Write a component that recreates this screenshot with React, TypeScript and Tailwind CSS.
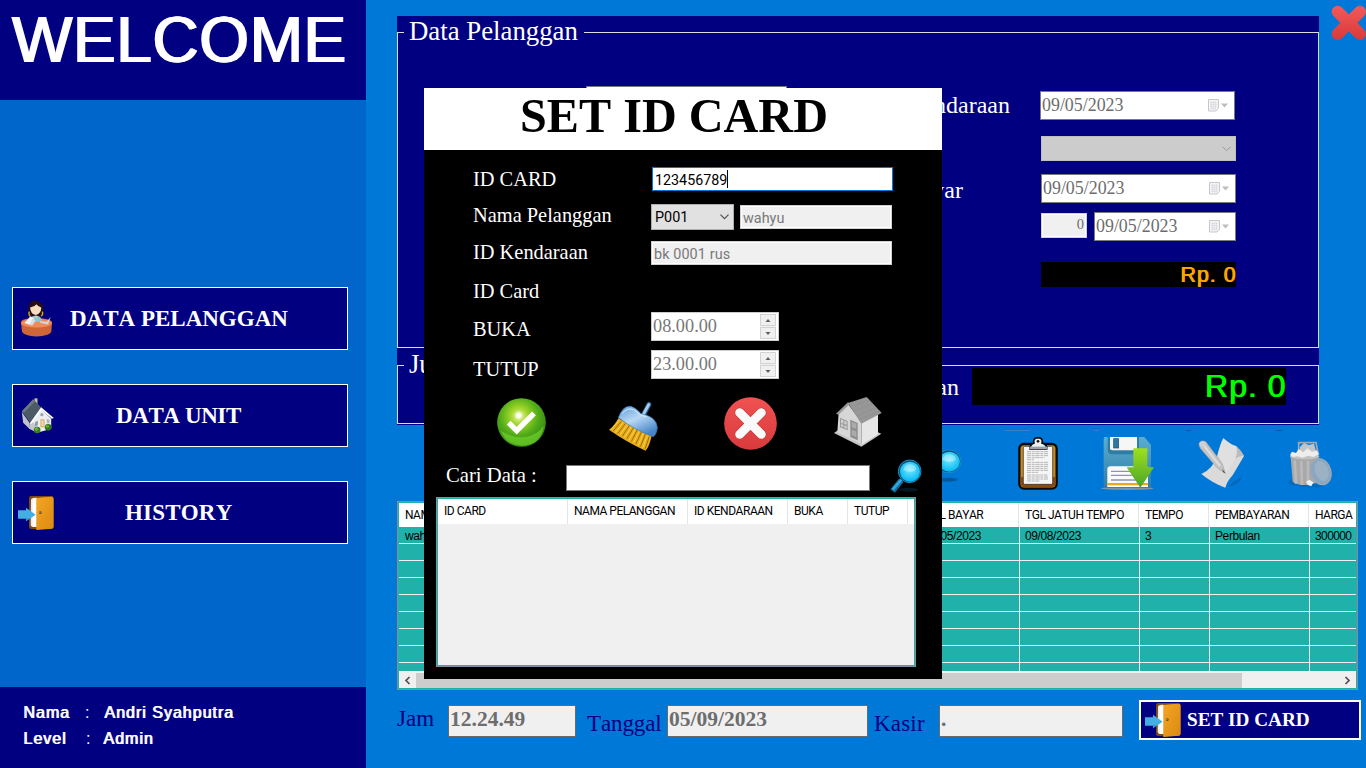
import React from "react";

const SERIF = "font-['Liberation_Serif',serif]";
const SANS = "font-['Liberation_Sans',sans-serif]";
const ROBOTO = "font-['Roboto',sans-serif]";

function DoorIcon() {
  return (
    <svg width="36" height="34" viewBox="0 0 108 102">
      <defs>
        <linearGradient id="door" x1="0" y1="0" x2="1" y2="1">
          <stop offset="0" stopColor="#f5a623" />
          <stop offset="1" stopColor="#d98a12" />
        </linearGradient>
      </defs>
      <rect x="33" y="0" width="73" height="99" rx="6" fill="#7a4a10" />
      <path d="M39 10Q42 5 48 5H56V93H44Q38 92 38 86Z" fill="#ececec" />
      <path d="M44 92V14L56 5V93Z" fill="#fff" />
      <path d="M55 6Q75 3 102 2Q107 3 107 8V92Q107 97 102 98L55 102Z" fill="url(#door)" />
      <circle cx="67" cy="50" r="4" fill="#6b4208" />
      <circle cx="66" cy="49" r="1.5" fill="#ddd" />
      <path d="M0 43H24V35L53 56L24 76V68H0Z" fill="#42aee2" />
      <path d="M0 66H24V74L34 69V66Z" fill="#2583c4" opacity=".5" />
    </svg>
  );
}

function WomanIcon() {
  return (
    <svg width="31" height="37" viewBox="0 0 92 109">
      <path d="M22 44Q18 8 36 2Q40 -2 46 3Q66 5 66 25Q68 42 60 48L26 48Z" fill="#2a0f12" />
      <path d="M25 34Q21 40 27 48M63 34Q67 42 60 48" stroke="#c8a81e" strokeWidth="4" fill="none" />
      <path d="M27 22Q40 20 46 12Q52 20 60 22Q61 40 44 44Q28 42 27 22Z" fill="#f8dcc0" />
      <path d="M0 66Q0 54 45 54Q92 54 92 68L90 94Q84 107 46 108Q10 107 3 94Z" fill="#cf6638" />
      <ellipse cx="46" cy="68" rx="46" ry="13" fill="#f08a58" />
      <path d="M22 58Q30 46 44 46Q58 46 62 58L56 64H30Z" fill="#8fc8cc" />
      <path d="M10 68L28 48L40 54L28 74Z" fill="#f4f4f4" />
      <path d="M24 74L36 52L43 62L34 75Z" fill="#d8dce0" />
      <path d="M56 62L76 64L88 50L80 72L58 68Z" fill="#cdd8dd" />
      <path d="M40 46H49L45 54Z" fill="#f3cfae" />
    </svg>
  );
}

function HouseColorIcon() {
  return (
    <svg width="33" height="36" viewBox="0 0 98 108">
      <rect x="40" y="1" width="9" height="22" fill="#c9b8ac" />
      <path d="M2 42L26 76V94L6 74Z" fill="#bfc4c8" />
      <path d="M28 70L60 34L90 62V92L48 104L26 90Z" fill="#eceef0" />
      <path d="M28 70L48 82V104L24 92Z" fill="#c4c8cc" />
      <path d="M2 40L36 4L62 30L28 76Z" fill="#4c5a66" />
      <path d="M2 40L36 4L42 10L7 46Z" fill="#6a7884" />
      <path d="M60 28L98 60L92 62L61 36L30 78L26 76Z" fill="#fff" />
      <circle cx="62" cy="50" r="5" fill="#9aa6b4" />
      <rect x="58" y="64" width="12" height="24" fill="#d8a860" />
      <path d="M61 67H67V85H61Z" fill="#f6dca0" />
      <path d="M42 72L50 68V82L42 85Z" fill="#8a98a6" />
      <path d="M77 62L85 65V76L77 76Z" fill="#aab4be" />
      <circle cx="48" cy="96" r="10" fill="#3c7d24" />
      <circle cx="46" cy="93" r="5" fill="#6fae3a" />
      <circle cx="81" cy="88" r="10" fill="#2f741c" />
      <circle cx="79" cy="85" r="5" fill="#66a832" />
    </svg>
  );
}

function CheckIcon() {
  return (
    <svg width="49" height="49" viewBox="0 0 147 147">
      <defs>
        <radialGradient id="chk" cx=".45" cy=".37" r=".6">
          <stop offset="0" stopColor="#f0f8a0" />
          <stop offset=".3" stopColor="#9cd52a" />
          <stop offset=".65" stopColor="#52ac18" />
          <stop offset="1" stopColor="#378a10" />
        </radialGradient>
        <radialGradient id="chkGlow">
          <stop offset=".3" stopColor="#fff" />
          <stop offset="1" stopColor="#fff" stopOpacity="0" />
        </radialGradient>
      </defs>
      <circle cx="73.5" cy="73.5" r="73" fill="url(#chk)" />
      <path d="M12 98Q50 122 84 117Q120 112 140 84Q132 142 73 143Q26 140 12 98Z" fill="#6fd22c" opacity=".7" />
      <circle cx="65" cy="52" r="14" fill="url(#chkGlow)" />
      <path d="M35 74L59 98L111 46" fill="none" stroke="#fff" strokeWidth="16" />
    </svg>
  );
}

function BroomIcon() {
  const bristles = Array.from({ length: 16 }, (_, i) => i);
  return (
    <svg width="49" height="51" viewBox="0 0 147 153">
      <defs>
        <linearGradient id="brm" x1="0" y1="0" x2=".6" y2="1">
          <stop offset="0" stopColor="#5d9ad8" />
          <stop offset=".5" stopColor="#b8d8f4" />
          <stop offset="1" stopColor="#4585c8" />
        </linearGradient>
      </defs>
      <path d="M102 44L120 10" stroke="#3c6fa8" strokeWidth="14" strokeLinecap="round" />
      <path d="M101 44L119 11" stroke="#a8cef0" strokeWidth="8" strokeLinecap="round" />
      <path d="M28 52Q14 78 0 86Q54 124 110 149Q122 134 128 104Z" fill="#e9ad1a" />
      {bristles.map((i) => (
        <path
          key={i}
          d={`M${31 + i * 6} ${58 + i * 3.2}L${6 + i * 6.8} ${86 + i * 3.9}`}
          stroke={i % 2 ? "#8c6008" : "#ffd84e"}
          strokeWidth="2.5"
        />
      ))}
      <path d="M28 50Q42 12 66 16Q80 20 96 38Q142 46 145 80Q143 100 133 107Q82 90 28 50Z" fill="url(#brm)" stroke="#3b77b8" strokeWidth="2" />
      <path d="M40 38Q54 18 74 26Q92 44 112 48" fill="none" stroke="#d8ecfc" strokeWidth="3" />
    </svg>
  );
}

function CancelIcon() {
  return (
    <svg width="53" height="53" viewBox="0 0 159 159">
      <defs>
        <linearGradient id="cnl" x1="0" y1="0" x2="0" y2="1">
          <stop offset="0" stopColor="#f05252" />
          <stop offset="1" stopColor="#d93a3c" />
        </linearGradient>
      </defs>
      <circle cx="79.5" cy="79.5" r="79" fill="url(#cnl)" />
      <path d="M47 47L112 112M112 47L47 112" stroke="#c22f30" strokeWidth="30" strokeLinecap="round" />
      <path d="M47 47L112 112M112 47L47 112" stroke="#fafafa" strokeWidth="27" strokeLinecap="round" />
    </svg>
  );
}

function GrayHouseIcon() {
  return (
    <svg width="48" height="50" viewBox="0 0 144 150">
      <path d="M0 108L14 98L82 140L128 104L142 110L82 149Z" fill="#c4c4c4" />
      <path d="M14 48L42 20L82 76V142L10 106Z" fill="#d6d6d6" />
      <path d="M82 76L132 48V112L82 144Z" fill="#e6e6e6" />
      <path d="M6 50L42 16L48 20L14 53Z" fill="#9a9a9a" />
      <path d="M42 18L98 0L143 48L82 80Z" fill="#979797" />
      <path d="M52 28L106 9M62 42L117 20M70 56L128 32M76 68L138 42" stroke="#8b8b8b" strokeWidth="1.5" />
      <path d="M18 62L41 72V100L18 91Z" fill="#9c9c9c" />
      <path d="M21 67L28 70V80L21 77ZM31 71L38 74V83L31 81ZM21 81L28 84V91L21 88ZM31 85L38 88V95L31 92Z" fill="#cfcfcf" />
      <path d="M49 68L71 78V130L49 120Z" fill="#8c8c8c" />
      <path d="M53 74L67 80V96L53 91ZM53 98L67 103V121L53 114Z" fill="#ababab" />
    </svg>
  );
}

function MagnifierIcon({ w, h }: { w: number; h: number }) {
  return (
    <svg width={w} height={h} viewBox="0 0 96 102" preserveAspectRatio="none">
      <defs>
        <radialGradient id="mag" cx=".5" cy=".4" r=".6">
          <stop offset="0" stopColor="#7ae8ff" />
          <stop offset="1" stopColor="#00b8f4" />
        </radialGradient>
      </defs>
      <ellipse cx="56" cy="92" rx="28" ry="6" fill="#06324e" opacity=".45" />
      <path d="M34 64L8 96" stroke="#0f6fa2" strokeWidth="17" />
      <path d="M34 62L8 92" stroke="#30a6dc" strokeWidth="8" />
      <circle cx="59" cy="37" r="34" fill="#0c4a70" stroke="#1e8cc4" strokeWidth="3" />
      <circle cx="60" cy="38" r="30" fill="url(#mag)" />
      <path d="M40 32Q46 14 62 16Q80 18 78 34Q60 44 40 32Z" fill="#fff" opacity=".35" />
    </svg>
  );
}

function ClipboardIcon() {
  return (
    <svg width="40" height="53" viewBox="0 0 120 159">
      <rect x="4" y="21" width="112" height="134" rx="14" fill="#c8881e" stroke="#0a0a0a" strokeWidth="7" />
      <path d="M8 120V142Q9 150 18 150H102Q111 150 112 142V120Z" fill="#8a4a10" />
      <rect x="16" y="28" width="88" height="114" rx="4" fill="#f6f6f6" stroke="#222" strokeWidth="2" />
      <path d="M36 36V30Q40 20 48 18Q44 3 60 2Q76 3 72 18Q82 20 86 30V36Z" fill="#eee" stroke="#0a0a0a" strokeWidth="5" />
      <circle cx="60" cy="13" r="4" fill="#111" />
      <rect x="34" y="29" width="53" height="7" fill="#9aa0ac" />
      <path
        d="M27 44H92M27 50H90M27 56H92M27 62H80M27 68H48M27 76H92M27 82H90M27 88H92M27 94H88M27 100H92M27 106H60M27 114H88M27 120H90M27 126H92M27 132H64"
        stroke="#8a8a8a"
        strokeWidth="1.8"
        strokeDasharray="13 2 8 2"
      />
    </svg>
  );
}

function FloppyIcon() {
  return (
    <svg width="53" height="53" viewBox="0 0 159 159">
      <defs>
        <linearGradient id="arr" x1="0" y1="0" x2="0" y2="1">
          <stop offset="0" stopColor="#9ee01e" />
          <stop offset="1" stopColor="#4aa428" />
        </linearGradient>
        <linearGradient id="flp" x1="0" y1="0" x2="0" y2="1">
          <stop offset="0" stopColor="#5caed0" />
          <stop offset="1" stopColor="#2f7da6" />
        </linearGradient>
      </defs>
      <ellipse cx="79" cy="154" rx="79" ry="5" fill="#7a96a8" />
      <path d="M10 0H130L150 24V146Q150 152 144 152H16Q8 152 8 144V8Q8 0 10 0Z" fill="url(#flp)" />
      <path d="M20 0H114V40Q112 52 102 52H32Q20 50 20 40Z" fill="#2e7da4" />
      <path d="M27 0H108V34Q108 40 102 40H34Q27 40 27 34Z" fill="#f6f6f6" />
      <rect x="38" y="5" width="15" height="28" fill="#2b7ba0" stroke="#175274" strokeWidth="2" />
      <path d="M19 150V96Q20 88 28 88H134Q141 88 141 96V150Z" fill="#fafafa" />
      <path d="M30 103H112M30 115H112M30 129H112" stroke="#8e92b4" strokeWidth="4" />
      <path d="M19 138H141V145H19Z" fill="#e8a820" />
      <path d="M97 34H139V91H159L118 152L77 91H97Z" fill="url(#arr)" />
    </svg>
  );
}

function EditIcon() {
  return (
    <svg width="46" height="52" viewBox="0 0 138 156">
      <path d="M90 146Q126 140 132 116L110 130Z" fill="#065ca6" opacity=".6" />
      <path d="M76 1Q100 22 114 24Q128 36 138 54L104 112Q88 128 82 149Q44 136 10 108Q46 92 58 52Q66 20 76 1Z" fill="#dadada" />
      <path d="M114 24Q120 42 112 62Q124 52 138 54Q128 36 114 24Z" fill="#bcbcbc" />
      <path d="M76 1Q66 20 60 50L84 104L112 62Q120 42 114 24Q100 22 76 1Z" fill="#e2e2e2" opacity=".7" />
      <path d="M4 16Q10 4 24 12L72 76L82 106L56 88L8 32Q2 24 4 16Z" fill="#c4c4c4" stroke="#a2a2a2" strokeWidth="2" />
      <path d="M14 18L66 84" stroke="#e0e0e0" strokeWidth="6" />
      <ellipse cx="14" cy="18" rx="10" ry="8" fill="#d0d0d0" />
      <path d="M72 92L82 106L76 103Z" fill="#333" />
    </svg>
  );
}

function TrashIcon() {
  return (
    <svg width="44" height="48" viewBox="0 0 132 144">
      <path d="M0 128Q0 112 20 116L110 136Q60 146 0 128Z" fill="#0860a8" opacity=".5" />
      <path d="M32 34V5H84L90 36" fill="none" stroke="#a8a8a8" strokeWidth="5" />
      <path d="M36 18L48 6L62 12L78 8L84 30L58 42L34 34Z" fill="#c4c4c4" />
      <path d="M8 48L14 122Q40 140 84 126L92 48Z" fill="#a8a8a8" />
      <path d="M20 58L24 128M40 60L42 132M60 60V132" stroke="#bababa" strokeWidth="8" />
      <ellipse cx="50" cy="46" rx="44" ry="9" fill="#c2c2c2" />
      <path d="M6 42L12 32L24 36L32 24L46 34L58 22L72 32L86 28L94 40L76 48L60 44L44 50L28 46L16 48Z" fill="#ededed" />
      <ellipse cx="98" cy="92" rx="30" ry="40" transform="rotate(-20 98 92)" fill="#8aa6c0" stroke="#a0a8b0" strokeWidth="4" />
      <ellipse cx="101" cy="90" rx="20" ry="31" transform="rotate(-20 101 90)" fill="#a4b6c6" opacity=".7" />
      <path d="M54 122L64 116L76 124L70 136L60 132Z" fill="#f2f2f2" />
    </svg>
  );
}

function CloseIcon() {
  return (
    <svg width="36" height="36" viewBox="0 0 108 108">
      <defs>
        <linearGradient id="cls" x1="0" y1="0" x2="0" y2="108" gradientUnits="userSpaceOnUse">
          <stop offset="0" stopColor="#f45a5a" />
          <stop offset="1" stopColor="#d83838" />
        </linearGradient>
      </defs>
      <path d="M20 20L87 87M87 20L20 87" stroke="url(#cls)" strokeWidth="36" strokeLinecap="round" />
    </svg>
  );
}

function CalendarGlyph() {
  return (
    <svg width="20" height="13" viewBox="0 0 20 13" className="mr-[6px] shrink-0">
      <path d="M.5 .5H10.5V9L8 12H.5Z" fill="#f4f4f6" stroke="#c8c8c8" />
      <path d="M2 3.500H9M2 5.500H9M2 7.500H9M2 9.500H8M3.500 2V10.500M5.500 2V10.500M7.500 2V10.500" stroke="#d8dae2" strokeWidth=".7" />
      <path d="M13 4.500H20L16.500 8.500Z" fill="#bdbdbd" />
    </svg>
  );
}

function DateBox({ className }: { className: string }) {
  return (
    <div className={`flex h-[29px] items-center justify-between border border-[#7a7a7a] bg-white pl-px text-[17.9px] leading-[27px] text-[#6d6d6d] ${className}`}>
      <span>09/05/2023</span>
      <CalendarGlyph />
    </div>
  );
}

function TimeSpinner({ value }: { value: string }) {
  return (
    <div className="flex h-[29px] w-[128px] justify-between border border-[#cccccc] bg-white pl-px text-[18.3px] leading-[27px] text-[#787878]">
      <span>{value}</span>
      <div className="mt-px mr-[2px] flex h-[25px] w-[16px] flex-col gap-px bg-[#f0f0f0]">
        {["M4.500 7H9.500L7 4Z", "M4.500 4H9.500L7 7Z"].map((d) => (
          <div key={d} className="flex h-[12px] w-[16px] items-center justify-center border border-[#d4d4d4] bg-[#f0f0f0]">
            <svg width="14" height="10" viewBox="0 0 14 10">
              <path d={d} fill="#606060" />
            </svg>
          </div>
        ))}
      </div>
    </div>
  );
}

function NavButton({ label, icon, pad, text }: { label: string; icon: React.ReactNode; pad: string; text: string }) {
  return (
    <button className="relative flex h-[63px] w-[336px] items-center border border-white bg-[#000080] text-left">
      <span className={`absolute ${pad}`}>{icon}</span>
      <span className={`pt-[2px] font-bold whitespace-pre text-white text-[23px] ${text} ${SERIF}`}>{label}</span>
    </button>
  );
}

const gridCols = [
  { w: "w-[121px]", head: "NAMA", cell: "wahyu" },
  { w: "w-[250px]", head: "", cell: "" },
  { w: "w-[150px]", head: "", cell: "" },
  { w: "w-[100px]", head: "TGL BAYAR", cell: "09/05/2023" },
  { w: "w-[120px]", head: "TGL JATUH TEMPO", cell: "09/08/2023" },
  { w: "w-[70px]", head: "TEMPO", cell: "3" },
  { w: "w-[100px]", head: "PEMBAYARAN", cell: "Perbulan" },
  { w: "w-[47px]", head: "HARGA", cell: "300000" },
];

const cardCols = [
  { w: "w-[130px]", head: "ID CARD" },
  { w: "w-[120px]", head: "NAMA PELANGGAN" },
  { w: "w-[100px]", head: "ID KENDARAAN" },
  { w: "w-[60px]", head: "BUKA" },
  { w: "w-[60px]", head: "TUTUP" },
];

function Sidebar() {
  return (
    <aside className="flex h-[768px] w-[366px] shrink-0 flex-col bg-[#0066cc]">
      <header className="h-[100px] bg-[#000080] pl-[11px]">
        <h1 className={`pt-[3px] text-[64px] leading-[74px] tracking-[0.6px] text-white [text-shadow:1px_0_#fff,2px_0_#fff] ${SANS}`}>WELCOME</h1>
      </header>
      <nav className="flex flex-1 flex-col gap-[34px] pt-[187px] pl-[12px]">
        <NavButton label="DATA PELANGGAN" icon={<WomanIcon />} pad="left-[8px] top-[12px]" text="pl-[57px]" />
        <NavButton label="DATA UNIT" icon={<HouseColorIcon />} pad="left-[8px] top-[13px]" text="pl-[103px] tracking-[-0.4px]" />
        <NavButton label="HISTORY" icon={<DoorIcon />} pad="left-[5px] top-[14px]" text="pl-[112px] tracking-[0.2px]" />
      </nav>
      <footer className={`grid h-[81px] grid-cols-[62px_19px_1fr] content-start bg-[#000080] pt-[13px] pl-[23px] text-[16px] leading-[26px] tracking-[1px] text-white [text-shadow:1px_0_#fff] ${SANS}`}>
        <span>Nama</span>
        <span className="[text-shadow:none]">:</span>
        <span>Andri Syahputra</span>
        <span>Level</span>
        <span className="pl-px [text-shadow:none]">:</span>
        <span className="-ml-px">Admin</span>
      </footer>
    </aside>
  );
}

function CustomerPanel() {
  const label = "text-right text-[24px] leading-[28px] text-white";
  return (
    <section className={`mt-[16px] ml-[31px] h-[409px] w-[922px] bg-[#000080] ${SERIF}`}>
      <fieldset className="h-[332px] w-[922px] border border-[#dcdcdc]">
        <legend className="ml-[6px] h-[32px] w-[180px] pl-[5px] text-[26.8px] leading-[31px] text-white">Data Pelanggan</legend>
        <div className="flex">
          <div className="mt-[38px] ml-[188px] h-[30px] w-[201px] border border-[#7a7a7a] bg-white" />
          <div className="ml-[35px] flex w-[190px] flex-col pt-[43px] pr-[2px]">
            <span className={label}>ID Kendaraan</span>
            <span className={`mt-[57px] pr-[47px] ${label}`}>Tgl Bayar</span>
          </div>
          <div className="ml-[29px] pt-[43px]">
            <DateBox className="-ml-px w-[195px]" />
            <div className="mt-[16px] flex h-[25px] w-[195px] items-center justify-end border border-[#bfbfbf] bg-[#cccccc] pr-[4px]">
              <svg width="9" height="6" viewBox="0 0 9 6">
                <path d="M.5 .7L4.500 4.700L8.500 .7" fill="none" stroke="#9a9a9a" />
              </svg>
            </div>
            <DateBox className="mt-[13px] w-[195px]" />
            <div className="mt-[9px] flex justify-between">
              <div className="mt-px h-[25px] w-[46px] border border-[#d0d0d0] bg-[#f0f0f0] pr-[2px] text-right text-[14.5px] leading-[21px] text-[#6d6d6d] shadow-[inset_0_0_0_1px_white]">0</div>
              <DateBox className="w-[142px]" />
            </div>
            <div className={`mt-[21px] h-[25px] w-[195px] overflow-hidden bg-black text-right text-[21.33px] leading-[26px] tracking-[1px] text-[#ffa500] [text-shadow:1px_0_#ffa500] ${SANS}`}>
              Rp. 0
            </div>
          </div>
        </div>
      </fieldset>
      <fieldset className="h-[76px] w-[922px] border border-[#dcdcdc]">
        <legend className="ml-[6px] h-[34px] w-[60px] pl-[5px] text-[26.67px] leading-[33px] text-white">Ju</legend>
        <div className="-mt-[14px] flex">
          <span className={`w-[561px] pt-[5px] ${label}`}>Pembayaran</span>
          <div className={`ml-[13px] h-[37px] w-[314px] bg-black text-right text-[32px] leading-[37px] tracking-[1px] text-[#00ff00] [text-shadow:1px_0_#00ff00] ${SANS}`}>
            Rp. 0
          </div>
        </div>
      </fieldset>
    </section>
  );
}

function Toolbar() {
  return (
    <div className="flex h-[76px] items-start pt-[5px]">
      <div className="mt-[19px] ml-[562px]">
        <MagnifierIcon w={34} h={34} />
      </div>
      <div className="ml-[42px] flex w-[60px] flex-col pl-[14px]">
        <i className="mb-[6px] -ml-[14px] h-px w-[26px] bg-[#3c7fc0]" />
        <ClipboardIcon />
      </div>
      <div className="ml-[37px] flex w-[60px] flex-col">
        <i className="mb-[6px] -ml-[7px] h-px w-[5px] bg-[#3c7fc0]" />
        <FloppyIcon />
      </div>
      <div className="ml-[37px] flex w-[60px] flex-col">
        <i className="mb-[7px] -ml-[12px] h-px w-[5px] bg-[#1c5498]" />
        <EditIcon />
      </div>
      <div className="ml-[30px] flex w-[60px] flex-col">
        <i className="mb-[10px] -ml-[12px] h-px w-[6px] bg-[#1c5498]" />
        <TrashIcon />
      </div>
    </div>
  );
}

function CustomerGrid() {
  return (
    <div className="ml-[31px] flex h-[189px] w-[961px] shrink-0 flex-col border border-[#848f98] bg-[#20b2aa] p-px">
      <div className={`flex h-[24px] w-[957px] shrink-0 overflow-hidden bg-white text-[12px] leading-[24px] tracking-[-0.47px] text-black ${ROBOTO}`}>
        {gridCols.map((c, i) => (
          <div
            key={i}
            className={`shrink-0 border-r border-[#e5e5e5] pl-[6px] whitespace-nowrap first:-ml-px first:pl-[7px] last:border-r-0 ${c.w}`}
          >
            {c.head}
          </div>
        ))}
      </div>
      <div className="h-[144px] overflow-hidden">
        {Array.from({ length: 9 }, (_, r) => (
          <div
            key={r}
            className={`flex h-[17px] w-[957px] border-b border-[#f0f0f0] text-[12px] leading-[18px] tracking-[-0.4px] text-black ${SANS}`}
          >
            {gridCols.map((c, i) => (
              <div
                key={i}
                className={`shrink-0 overflow-hidden border-r border-[#f0f0f0] pl-[5px] whitespace-nowrap first:pl-[6px] last:border-r-0 last:tracking-[-0.6px] ${c.w}`}
              >
                {r === 0 ? c.cell : ""}
              </div>
            ))}
          </div>
        ))}
      </div>
      <div className="flex h-[17px] w-[957px] items-center justify-between border-t border-white bg-[#f0f0f0]">
        <svg width="17" height="15" viewBox="0 0 17 15">
          <path d="M10.500 4L7 7.500L10.500 11" fill="none" stroke="#505050" strokeWidth="1.7" />
        </svg>
        <div className="h-[15px] w-[826px] bg-[#cdcdcd]" />
        <svg width="114" height="15" viewBox="0 0 114 15">
          <path d="M103.500 4L107 7.500L103.500 11" fill="none" stroke="#505050" strokeWidth="1.7" />
        </svg>
      </div>
    </div>
  );
}

function StatusBar() {
  const label = "text-[23px] leading-[28px] text-[#000080]";
  const box = "mt-[15px] h-[32px] border border-[#6a6a6a] bg-[#f0f0f0] pl-px font-bold leading-[26px] text-[21.5px] text-[#6d6d6d]";
  return (
    <div className={`flex h-[78px] items-start pl-[31px] ${SERIF}`}>
      <span className={`mt-[15px] w-[51px] ${label}`}>Jam</span>
      <div className={`w-[128px] ${box}`}>12.24.49</div>
      <span className={`mt-[20px] ml-[11px] w-[80px] tracking-[-0.1px] ${label}`}>Tanggal</span>
      <div className={`w-[201px] ${box}`}>05/09/2023</div>
      <span className={`mt-[20px] ml-[6px] w-[65px] tracking-[0.2px] ${label}`}>Kasir</span>
      <div className={`w-[184px] ${box}`}>.</div>
      <button className="mt-[10px] ml-[16px] flex h-[40px] w-[222px] items-center border-2 border-white bg-[#000080] pl-[4px] text-[19.2px] font-bold text-white">
        <DoorIcon />
        <span className="ml-[6px] pt-px">SET ID CARD</span>
      </button>
    </div>
  );
}

function CardDialog() {
  const disabled = `h-[24px] border border-[#d0d0d0] bg-[#f0f0f0] pl-[2px] text-[14.4px] leading-[25px] text-[#787878] shadow-[inset_0_0_0_1px_white] ${ROBOTO}`;
  return (
    <div className={`absolute top-[88px] left-[424px] flex h-[591px] w-[518px] flex-col bg-black ${SERIF}`}>
      <h2 className="h-[62px] bg-white pl-[96px] text-[48.2px] leading-[56px] font-bold text-black">SET ID CARD</h2>
      <div className="flex h-[245px] pl-[49px]">
        <div className="w-[178px] pt-[17px] text-[20.4px] leading-[24px] text-white">
          <div>ID CARD</div>
          <div className="mt-[12px]">Nama Pelanggan</div>
          <div className="mt-[13px]">ID Kendaraan</div>
          <div className="mt-[15px]">ID Card</div>
          <div className="mt-[14px]">BUKA</div>
          <div className="mt-[16px]">TUTUP</div>
        </div>
        <div className="w-[242px] pt-[17px]">
          <div className={`ml-px flex h-[24px] w-[241px] border border-[#0078d7] bg-white pl-[2px] text-[14.3px] leading-[25px] text-black ${ROBOTO}`}>
            <span>123456789</span>
            <i className="mt-[2px] h-[18px] w-px bg-black" />
          </div>
          <div className="mt-[13px] flex h-[26px] items-center justify-between pr-px">
            <div className={`flex h-[26px] w-[83px] items-center justify-between border border-[#adadad] bg-[#e1e1e1] pr-[4px] pl-[3px] text-[14.4px] text-black ${ROBOTO}`}>
              <span className="pt-[2px]">P001</span>
              <svg width="9" height="6" viewBox="0 0 9 6">
                <path d="M.5 .7L4.500 4.700L8.500 .7" fill="none" stroke="#505050" strokeWidth="1.2" />
              </svg>
            </div>
            <div className={`w-[152px] ${disabled}`}>wahyu</div>
          </div>
          <div className={`mt-[11px] w-[241px] tracking-[0.1px] ${disabled}`}>bk 0001 rus</div>
          <div className="mt-[47px] mb-[9px]">
            <TimeSpinner value="08.00.00" />
          </div>
          <TimeSpinner value="23.00.00" />
        </div>
      </div>
      <div className="flex h-[64px] items-start pl-[73px]">
        <div className="mt-[3px]"><CheckIcon /></div>
        <div className="mt-[6px] ml-[63px]"><BroomIcon /></div>
        <div className="mt-[2px] ml-[66px]"><CancelIcon /></div>
        <div className="mt-[2px] ml-[57px]"><GrayHouseIcon /></div>
      </div>
      <div className="flex h-[38px] items-start pl-[22px]">
        <span className="mt-[4px] w-[120px] text-[20.7px] leading-[24px] text-white">Cari Data :</span>
        <div className="mt-[6px] h-[26px] w-[304px] border border-[#7a7a7a] bg-white" />
        <div className="ml-[20px]"><MagnifierIcon w={32} h={34} /></div>
      </div>
      <div className="ml-[12px] h-[170px] w-[480px] border border-[#848f98] bg-[#20b2aa] p-px">
        <div className="h-[166px] w-[476px] bg-[#f0f0f0]">
          <div className={`flex h-[25px] bg-white text-[12px] leading-[24px] tracking-[-0.47px] text-black ${ROBOTO}`}>
            {cardCols.map((c) => (
              <div key={c.head} className={`shrink-0 border-r border-[#e5e5e5] pl-[6px] whitespace-nowrap ${c.w}`}>
                {c.head}
              </div>
            ))}
          </div>
        </div>
      </div>
    </div>
  );
}

export default function App() {
  return (
    <div className="relative flex h-[768px] w-[1366px] overflow-hidden bg-[#0078d7] [font-kerning:none]">
      <Sidebar />
      <main className="flex w-[1000px] flex-col overflow-hidden">
        <div className="flex h-[425px] shrink-0">
          <CustomerPanel />
          <div className="mt-[5px] ml-[12px] shrink-0">
            <CloseIcon />
          </div>
        </div>
        <Toolbar />
        <CustomerGrid />
        <StatusBar />
      </main>
      <CardDialog />
    </div>
  );
}
